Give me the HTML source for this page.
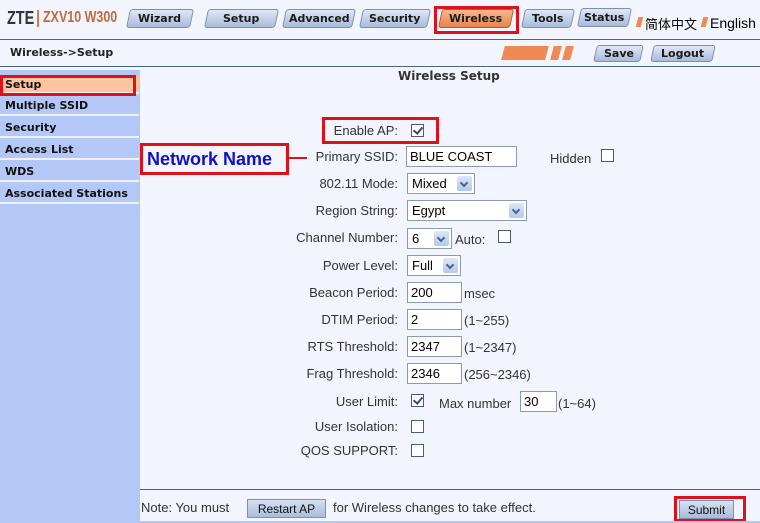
<!DOCTYPE html><html><head><style>
*{margin:0;padding:0;box-sizing:border-box}
body{width:760px;height:523px;position:relative;background:#f2f5fd;font-family:"Liberation Sans","DejaVu Sans",sans-serif;overflow:hidden}
.a{position:absolute;white-space:nowrap}
.tab{position:absolute;top:9px;height:19px;background:linear-gradient(#dfe7f5,#a9bbdb);border:1px solid #7d8fae;border-radius:3px;transform:skewX(-12deg);font:bold 11px "DejaVu Sans",sans-serif;color:#1a1a1a;text-align:center;line-height:17px}
.tab span{display:inline-block;transform:skewX(12deg)}
.side{position:absolute;left:0;top:70px;width:140px;height:453px;background:#b4c8f8}
.si{position:absolute;left:0;width:139px;height:20px;font:bold 11px "DejaVu Sans",sans-serif;color:#111;padding-left:5px;line-height:20px;border-bottom:2px solid #eef2fc}
.lb{position:absolute;right:362px;font-size:13px;color:#333;white-space:nowrap}
.in{position:absolute;left:407px;height:21px;border:1px solid #8a9ab3;background:#fff;font-size:13px;padding-left:3px;line-height:19px;color:#000}
.sel{position:absolute;left:407px;height:21px;border:1px solid #8a9ab3;background:#fff;font-size:13px;padding-left:4px;line-height:19px}
.sel i{position:absolute;right:2px;top:2px;width:15px;height:15px;background:linear-gradient(#dce6fa,#b5c8ef);border-radius:2px}
.sel i:after{content:"";position:absolute;left:4px;top:4px;width:4px;height:4px;border-right:2px solid #4a5f8c;border-bottom:2px solid #4a5f8c;transform:rotate(45deg)}
.cb{position:absolute;width:13px;height:13px;border:1px solid #4b5a75;background:#fff}
.cb.on:after{content:"";position:absolute;left:3px;top:0px;width:4px;height:7px;border-right:2px solid #3b4a68;border-bottom:2px solid #3b4a68;transform:rotate(40deg)}
.t{position:absolute;font-size:13px;color:#333;white-space:nowrap}
.btn{position:absolute;height:19px;background:linear-gradient(#d6e0f0,#a8bcdc);border:1px solid #8090b0;font-size:12px;text-align:center;line-height:18px;color:#111}
.red{position:absolute;border:3px solid #e0101a}
</style></head><body>
<div class="a" style="left:0;top:0;width:760px;height:40px;background:#f2f5fd"></div>
<div class="a" style="left:7px;top:8px;font:bold 18px 'Liberation Sans',sans-serif;color:#333;transform:scaleX(.8);transform-origin:left">ZTE</div>
<div class="a" style="left:37px;top:10px;width:2px;height:17px;background:#d08050"></div>
<div class="a" style="left:43px;top:9px;font:bold 16px 'Liberation Sans',sans-serif;color:#c26a3a;transform:scaleX(.78);transform-origin:left">ZXV10 W300</div>
<div class="tab" style="left:128px;width:64px"><span>Wizard</span></div>
<div class="tab" style="left:206px;width:71px"><span>Setup</span></div>
<div class="tab" style="left:284px;width:70px"><span>Advanced</span></div>
<div class="tab" style="left:361px;width:68px"><span>Security</span></div>
<div class="tab" style="left:440px;width:72px;background:linear-gradient(#f8b88c,#e9834c);border-color:#b25b2b"><span>Wireless</span></div>
<div class="tab" style="left:523px;width:50px"><span>Tools</span></div>
<div class="tab" style="left:579px;width:51px;top:8px"><span>Status</span></div>
<div class="red" style="left:434px;top:6px;width:85px;height:28px"></div>
<div class="a" style="left:637px;top:17px;width:5px;height:10px;background:#ef8a55;transform:skewX(-15deg)"></div>
<div class="a" style="left:645px;top:14px;font:13px 'Noto Sans CJK SC',sans-serif;color:#000">简体中文</div>
<div class="a" style="left:702px;top:17px;width:5px;height:10px;background:#ef8a55;transform:skewX(-15deg)"></div>
<div class="a" style="left:710px;top:15px;font-size:14px;color:#000">English</div>
<div class="a" style="left:0;top:39px;width:760px;height:1px;background:#4d6384"></div>
<div class="a" style="left:10px;top:46px;font:bold 11px 'DejaVu Sans',sans-serif;color:#222">Wireless-&gt;Setup</div>
<div class="a" style="left:503px;top:46px;width:44px;height:14px;background:#ef8a55;transform:skewX(-15deg)"></div>
<div class="a" style="left:552px;top:46px;width:8px;height:14px;background:#ef8a55;transform:skewX(-15deg)"></div>
<div class="a" style="left:564px;top:46px;width:8px;height:14px;background:#ef8a55;transform:skewX(-15deg)"></div>
<div class="tab" style="left:595px;top:45px;width:47px;height:17px;line-height:15px"><span>Save</span></div>
<div class="tab" style="left:652px;top:45px;width:62px;height:17px;line-height:15px"><span>Logout</span></div>
<div class="a" style="left:0;top:66px;width:760px;height:1px;background:#4d6384"></div>
<div class="side"></div>
<div class="si" style="top:76px;background:#fcc5a0;height:18px;line-height:18px">Setup</div>
<div class="red" style="left:0;top:75px;width:136px;height:21px"></div>
<div class="si" style="top:96px">Multiple SSID</div>
<div class="si" style="top:118px">Security</div>
<div class="si" style="top:140px">Access List</div>
<div class="si" style="top:162px">WDS</div>
<div class="si" style="top:184px">Associated Stations</div>
<div class="a" style="left:398px;top:69px;font:bold 12px 'DejaVu Sans',sans-serif;color:#333">Wireless Setup</div>

<div class="lb" style="top:123px">Enable AP:</div><div class="cb on" style="left:411px;top:124px"></div>
<div class="red" style="left:322px;top:117px;width:117px;height:27px"></div>
<div class="lb" style="top:149px">Primary SSID:</div><div class="in" style="left:406px;top:146px;width:111px">BLUE COAST</div>
<div class="t" style="left:550px;top:151px">Hidden</div><div class="cb" style="left:601px;top:149px"></div>
<div class="red" style="left:140px;top:143px;width:149px;height:32px"></div>
<div class="a" style="left:147px;top:149px;font:bold 18px 'Liberation Sans',sans-serif;color:#1010c8">Network Name</div>
<div class="a" style="left:289px;top:157px;width:18px;height:2px;background:#e0101a"></div>
<div class="lb" style="top:176px">802.11 Mode:</div><div class="sel" style="top:173px;width:68px">Mixed<i></i></div>
<div class="lb" style="top:203px">Region String:</div><div class="sel" style="top:200px;width:120px">Egypt<i></i></div>
<div class="lb" style="top:230px">Channel Number:</div><div class="sel" style="top:228px;width:45px">6<i></i></div>
<div class="t" style="left:455px;top:232px">Auto:</div><div class="cb" style="left:498px;top:230px"></div>
<div class="lb" style="top:258px">Power Level:</div><div class="sel" style="top:255px;width:54px">Full<i></i></div>
<div class="lb" style="top:285px">Beacon Period:</div><div class="in" style="top:282px;width:55px">200</div><div class="t" style="left:464px;top:286px">msec</div>
<div class="lb" style="top:312px">DTIM Period:</div><div class="in" style="top:309px;width:55px">2</div><div class="t" style="left:464px;top:313px">(1~255)</div>
<div class="lb" style="top:339px">RTS Threshold:</div><div class="in" style="top:336px;width:55px">2347</div><div class="t" style="left:464px;top:340px">(1~2347)</div>
<div class="lb" style="top:366px">Frag Threshold:</div><div class="in" style="top:363px;width:55px">2346</div><div class="t" style="left:464px;top:367px">(256~2346)</div>
<div class="lb" style="top:394px">User Limit:</div><div class="cb on" style="left:411px;top:394px"></div>
<div class="t" style="left:439px;top:396px">Max number</div><div class="in" style="left:520px;top:391px;width:37px">30</div><div class="t" style="left:558px;top:396px">(1~64)</div>
<div class="lb" style="top:419px">User Isolation:</div><div class="cb" style="left:411px;top:420px"></div>
<div class="lb" style="top:443px">QOS SUPPORT:</div><div class="cb" style="left:411px;top:444px"></div>

<div class="a" style="left:140px;top:489px;width:620px;height:1px;background:#4d6384"></div>
<div class="t" style="left:141px;top:500px">Note: You must</div>
<div class="btn" style="left:247px;top:499px;width:79px">Restart AP</div>
<div class="t" style="left:333px;top:500px">for Wireless changes to take effect.</div>
<div class="btn" style="left:679px;top:500px;width:55px">Submit</div>
<div class="red" style="left:674px;top:496px;width:72px;height:26px"></div>
<div class="a" style="left:140px;top:521px;width:620px;height:2px;background:#b4c8f8"></div>
</body></html>
